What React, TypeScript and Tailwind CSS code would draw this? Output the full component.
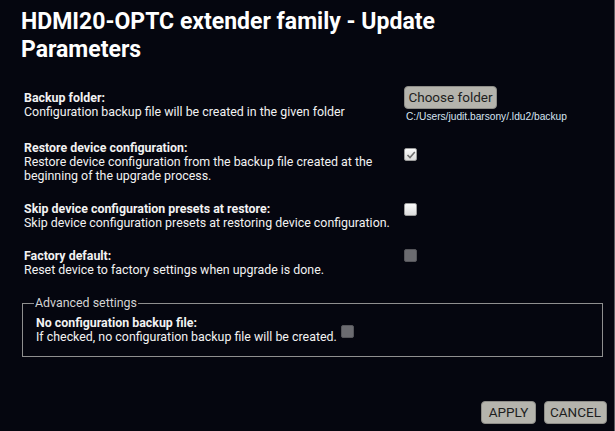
import React from 'react';

const font = { fontFamily: 'Roboto, "Liberation Sans", sans-serif' };

function Box({ state }: { state: 'checked' | 'empty' | 'disabled' }) {
  if (state === 'disabled') {
    return <span className="block w-[13px] h-[13px] rounded-[2px] bg-[#6b6b70] border border-[#55555a]" />;
  }
  return (
    <span className="flex items-center justify-center w-[13px] h-[13px] rounded-[2px] bg-gradient-to-b from-[#fafafa] to-[#dcdcdc] border border-[#9a9a9a]">
      {state === 'checked' && (
        <svg width="10" height="10" viewBox="0 0 10 10">
          <polyline points="1.5,5 4,7.5 8.8,2" fill="none" stroke="#6e6e6e" strokeWidth="1.6" />
        </svg>
      )}
    </span>
  );
}

function Row({
  title,
  desc,
  right,
  className = '',
}: {
  title: string;
  desc: React.ReactNode;
  right: React.ReactNode;
  className?: string;
}) {
  return (
    <div className={`flex ${className}`}>
      <div className="w-[380px] text-[12.4px] leading-[14px] text-[#f2f2f2]">
        <div className="font-bold">{title}</div>
        <div>{desc}</div>
      </div>
      <div>{right}</div>
    </div>
  );
}

export default function App() {
  return (
    <div
      className="w-[615px] h-[431px] bg-[#05060f] border-r border-[#5c5c60] flex flex-col overflow-hidden"
      style={font}
    >
      <h1 className="pl-[21px] pt-[8px] max-w-[480px] text-[23px] leading-[28px] font-bold text-white">
        HDMI20-OPTC extender family - Update Parameters
      </h1>

      <div className="pl-[24px] mt-[21px]">
        <Row
          title="Backup folder:"
          desc="Configuration backup file will be created in the given folder"
          className="[&>div:first-child]:mt-[6px]"
          right={
            <div>
              <button className="w-[93px] h-[23px] rounded-[4px] bg-[#b5b4ad] border border-[#8e8d88] text-[13.5px] text-[#1e1e1e]">
                Choose folder
              </button>
              <div
                className="mt-[2px] text-[10.2px] leading-[12px] text-[#d6e4f2] ml-[2px]"
                style={{ fontFamily: '"Liberation Sans", Arial, sans-serif' }}
              >
                C:/Users/judit.barsony/.ldu2/backup
              </div>
            </div>
          }
        />

        <Row
          className="mt-[18px]"
          title="Restore device configuration:"
          desc="Restore device configuration from the backup file created at the beginning of the upgrade process."
          right={
            <div className="mt-[7px]">
              <Box state="checked" />
            </div>
          }
        />

        <Row
          className="mt-[19px]"
          title="Skip device configuration presets at restore:"
          desc="Skip device configuration presets at restoring device configuration."
          right={
            <div className="mt-[1px]">
              <Box state="empty" />
            </div>
          }
        />

        <Row
          className="mt-[19px]"
          title="Factory default:"
          desc="Reset device to factory settings when upgrade is done."
          right={<Box state="disabled" />}
        />
      </div>

      <fieldset className="ml-[22px] mr-[11px] mt-[19px] border border-[#8f8f8f] pl-[11px] pr-[12px] pb-[12px]">
        <legend className="px-[1px] text-[12.4px] leading-[14px] text-[#d4d4d4]">Advanced settings</legend>
        <div className="pt-[6px] pl-[2px] text-[12.4px] leading-[14px] text-[#f2f2f2]">
          <div className="font-bold">No configuration backup file:</div>
          <div>
            If checked, no configuration backup file will be created.
            <span className="inline-block align-top relative -top-[5px] ml-[4px] w-[13px] h-[13px] rounded-[2px] bg-[#6b6b70] border border-[#55555a]" />
          </div>
        </div>
      </fieldset>

      <div className="mt-auto pb-[7px] pr-[7px] flex justify-end gap-[8px]">
        <button className="w-[55px] h-[23px] rounded-[4px] bg-[#b5b4ad] border border-[#8e8d88] text-[13.5px] text-[#1e1e1e]">
          APPLY
        </button>
        <button className="w-[63px] h-[23px] rounded-[4px] bg-[#b5b4ad] border border-[#8e8d88] text-[13.5px] text-[#1e1e1e]">
          CANCEL
        </button>
      </div>
    </div>
  );
}
